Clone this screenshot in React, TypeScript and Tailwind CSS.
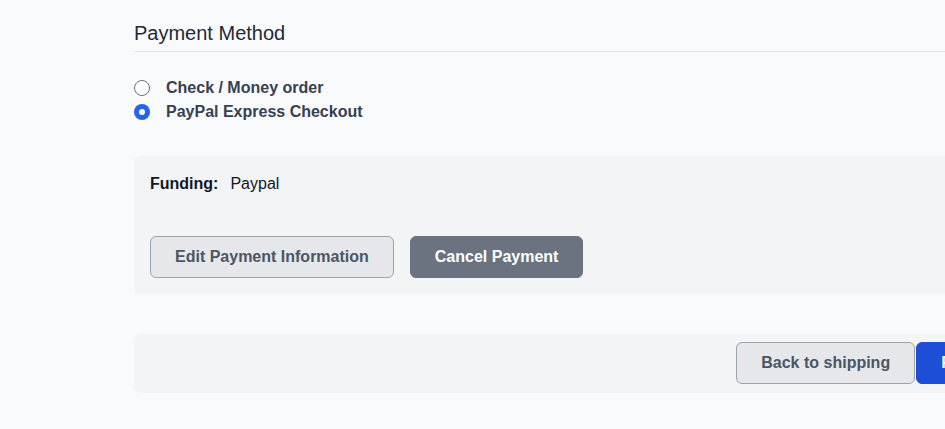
import React from "react";

function Radio({ checked }: { checked?: boolean }) {
  return checked ? (
    <span className="flex h-4 w-4 shrink-0 items-center justify-center rounded-full bg-[#2563eb]">
      <span className="h-1.5 w-1.5 rounded-full bg-white" />
    </span>
  ) : (
    <span className="h-4 w-4 shrink-0 rounded-full border border-[#6b7280] bg-white" />
  );
}

export default function App() {
  return (
    <div
      className="h-screen w-screen overflow-hidden bg-[#f9fafb] text-[#374151]"
      style={{ fontFamily: '"Liberation Sans", Arial, sans-serif' }}
    >
      <div className="ml-[134px] w-[1000px] pt-[19px]">
        <h2 className="border-b border-[#e5e7eb] pb-[4px] text-[20px] leading-7 text-[#1f2937]">
          Payment Method
        </h2>
        <div className="mt-6 flex flex-col">
          <label className="flex h-6 items-center gap-4">
            <Radio />
            <span className="text-base font-bold">Check / Money order</span>
          </label>
          <label className="flex h-6 items-center gap-4">
            <Radio checked />
            <span className="text-base font-bold">PayPal Express Checkout</span>
          </label>
        </div>
        <div className="mt-[32px] rounded-md bg-[#f3f4f6] px-4 pb-4 pt-4">
          <div className="flex h-6 items-center text-base text-[#111827]">
            <span className="font-bold">Funding:</span>
            <span className="ml-3">Paypal</span>
          </div>
          <div className="mt-10 flex gap-4">
            <button className="rounded-md border border-[#9ca3af] bg-[#e5e7eb] px-6 py-2 text-base font-bold leading-6 text-[#4b5563]">
              Edit Payment Information
            </button>
            <button className="rounded-md border border-[#6b7280] bg-[#6b7280] px-6 py-2 text-base font-bold leading-6 text-white">
              Cancel Payment
            </button>
          </div>
        </div>
        <div className="mt-10 flex justify-end rounded-md bg-[#f3f4f6] pb-[9px] pr-[78px] pt-2">
          <button className="rounded-md border border-[#9ca3af] bg-[#e5e7eb] px-6 py-2 text-base font-bold leading-6 text-[#4b5563]">
            Back to shipping
          </button>
          <button className="ml-px rounded-md border border-[#1d4ed8] bg-[#1d4ed8] px-6 py-2 text-base font-bold leading-6 text-white">
            Place Order
          </button>
        </div>
      </div>
    </div>
  );
}
